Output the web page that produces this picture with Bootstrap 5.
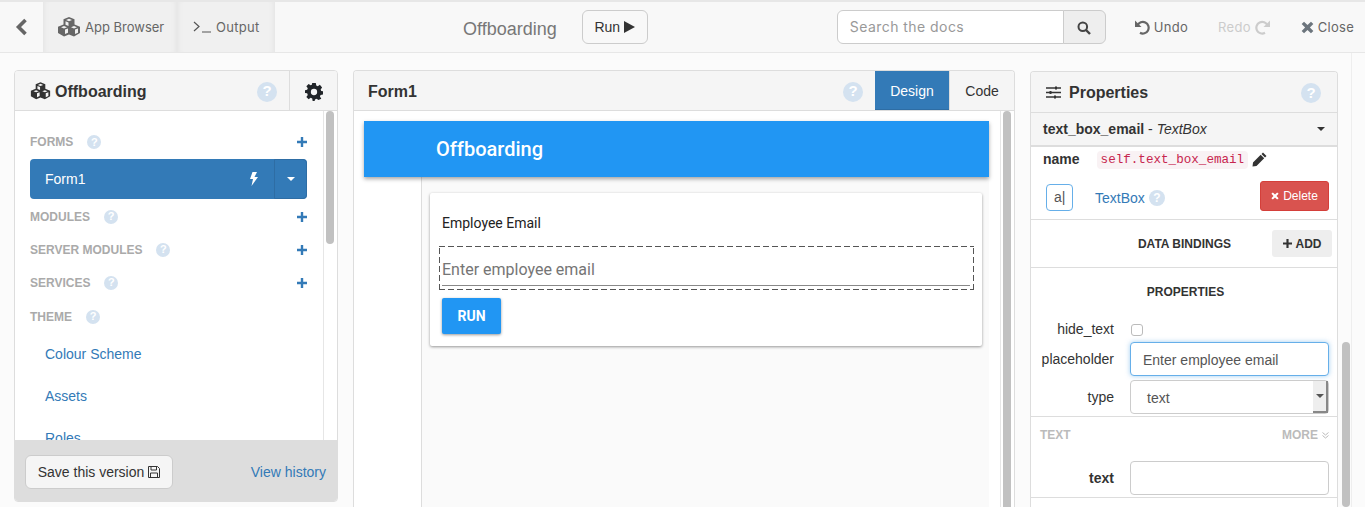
<!DOCTYPE html>
<html lang="en">
<head>
  <meta charset="UTF-8">
  <meta name="viewport" content="width=device-width, initial-scale=1.0">
  <title>Offboarding</title>
  <link href="https://cdn.jsdelivr.net/npm/bootstrap@5.3.0/dist/css/bootstrap.min.css" rel="stylesheet">
  <style>
    html, body { height: 507px; overflow: hidden; }
    body { background: #fbfbfb; font-family: "Liberation Sans", Arial, sans-serif; font-size: 14px; color: #333; }
    a { color: #337ab7; text-decoration: none; }

    /* top bar */
    .top-bar { height: 53px; border-top: 2px solid #e7e7e7; border-bottom: 1px solid #e7e7e7; background: #f8f8f8; font-family: Inter, sans-serif; font-size: 13px; color: #666; }
    .back-cell { width: 43px; }
    .tab-cell { height: 100%; background: #f0f0f0; box-shadow: inset 6px 0 6px -6px #ddd, inset -6px 0 6px -6px #ddd; }
    .tab-cell span, .top-action span { padding-top: 1px; }
    .tab-apps { width: 134px; padding-left: 14px; }
    .tab-output { width: 98px; padding-left: 16px; letter-spacing: .3px; }
    .app-title { margin-left: 188px; font-family: "Liberation Sans", sans-serif; font-size: 18px; color: #777; padding-top: 4px; }
    .run-btn { margin-left: 25px; width: 66px; height: 34px; padding: 0; background: #f8f8f8; border: 1px solid #ccc; color: #333; font-family: "Liberation Sans", sans-serif; font-size: 14px; }
    .search-group { margin-left: 189px; width: 269px; height: 34px; flex-wrap: nowrap; }
    .search-group .form-control { font-family: Inter, sans-serif; font-size: 14px; padding: 0 12px 2px; border-color: #ccc; background: #fff; box-shadow: none; letter-spacing: .45px; }
    .search-group .form-control::placeholder { color: #999; opacity: 1; }
    .search-btn { width: 43px; padding: 0 0 2px; background: #eee; border: 1px solid #ccc; }
    .top-action { color: #666; white-space: nowrap; letter-spacing: .3px; }
    .top-undo { margin-left: 28px; }
    .top-redo { margin-left: 30px; color: #ccc; }
    .top-close { margin-left: 30px; }

    /* workspace */
    .workspace { height: 454px; padding: 17px 0 0 14px; gap: 15px; overflow: hidden; }
    .ide-panel { border: 1px solid #ddd; border-radius: 4px; background: #fff; overflow: hidden; flex: none; --bs-card-border-radius: 4px; }
    .panel-head { height: 40px; flex: none; background: #f5f5f5; border-bottom: 1px solid #ddd; font-weight: 700; color: #333; }
    .panel-left { width: 324px; height: 432px; }
    .panel-mid { width: 662px; height: 437px; border-bottom: 0; border-radius: 4px 4px 0 0; }
    .panel-right { width: 308px; height: 436px; margin-top: 1px; border-bottom: 0; border-radius: 4px 4px 0 0; }
    .panel-right .panel-head { height: 41px; }
    .panel-title { font-size: 16px; padding-top: 2px; }
    .panel-right .panel-title { padding-top: 1px; }
    .gear-cell { width: 48px; height: 100%; border-left: 1px solid #ddd; padding-top: 2px; }
    .help-dot { display: inline-flex; align-items: center; justify-content: center; border-radius: 50%; background: #d4e2f0; color: #fff; font-weight: 700; flex: none; }
    .help-lg { width: 20px; height: 20px; font-size: 15px; margin-top: 2px; margin-right: 12px; }
    .panel-right .help-lg { margin-right: 16px; }
    .help-sm { width: 14px; height: 14px; font-size: 11px; }
    .help-type { width: 16px; height: 16px; font-size: 12px; margin-top: 9px; }

    .scroll-track { width: 14px; flex: none; background: #fff; border-left: 1px solid #e6e6e6; padding: 0 3px 0 2px; }
    .scroll-thumb { background: #c1c1c1; border-radius: 4px; width: 8px; }

    .side-list { padding: 14px 16px 0 15px; }
    .side-head { height: 33px; font-size: 12px; font-weight: 700; color: #aaa; }
    .side-head svg { margin-left: auto; color: #337ab7; }
    .side-head .help-dot { margin-left: 14px; }
    .side-first { height: 34px; }
    .side-theme { margin-top: 1px; }
    .form-row { height: 40px; border-radius: 4px; background: #337ab7; color: #fff; margin-bottom: 1px; }
    .form-main { padding-left: 15px; }
    .form-caret { width: 33px; height: 100%; border: 1px solid #2e6da4; border-radius: 0 4px 4px 0; }
    .caret-down { display: inline-block; border-top: 4px solid; border-left: 4px solid transparent; border-right: 4px solid transparent; }
    .side-link { display: block; height: 42px; line-height: 42px; padding-left: 15px; }
    .side-foot { height: 61px; flex: none; background: #ddd; padding: 3px 11px 0 10px; }
    .save-btn { height: 34px; width: 148px; padding: 0; background: #f5f5f5; border: 1px solid #ccc; color: #333; font-size: 14px; }
    .left-title { padding-left: 15px; }

    .tab-design { width: 74px; height: 100%; background: #337ab7; border-bottom: 1px solid #2e6da4; color: #fff; font-size: 14px; font-weight: 400; padding-top: 2px; }
    .tab-code { width: 65px; height: 100%; border-left: 1px solid #ddd; color: #333; font-size: 14px; font-weight: 400; padding-top: 2px; }
    .mid-title { padding-left: 14px; }
    .prop-icon { margin: 0 8px 0 15px; }

    /* form being designed */
    .canvas { padding: 10px 11px 0 10px; font-family: Roboto, sans-serif; min-width: 0; overflow: hidden; }
    .app-bar { height: 56px; background: #2196f3; color: #fff; font-size: 20px; font-weight: 500; padding-left: 72px; box-shadow: 0 2px 4px rgba(0,0,0,.35); position: relative; }
    .app-body { height: 400px; background: #fafafa; margin-left: 57px; border-left: 1px solid #ddd; padding: 16px 7px 0 8px; }
    .form-card { height: 153px; background: #fff; border-radius: 2px; box-shadow: 0 1px 3px rgba(0,0,0,.4); padding: 0 8px 0 9px; }
    .field-label { height: 53px; padding: 22px 0 0 3px; font-size: 14px; color: #222; line-height: 16px; }
    .field-box { height: 44px; padding: 1px 4px 0 3px;
      background-image: repeating-linear-gradient(90deg, #555 0 6px, transparent 6px 9px), repeating-linear-gradient(90deg, #555 0 6px, transparent 6px 9px), repeating-linear-gradient(0deg, #555 0 6px, transparent 6px 9px), repeating-linear-gradient(0deg, #555 0 6px, transparent 6px 9px);
      background-size: 100% 1px, 100% 1px, 1px 100%, 1px 100%;
      background-position: 0 0, 0 100%, 0 0, 100% 0;
      background-repeat: no-repeat; }
    .field-text { height: 39px; border-bottom: 1px solid #888; font-size: 16px; color: #757575; line-height: 46px; }
    .md-btn { margin: 8px 0 0 3px; width: 59px; height: 36px; border: 0; border-radius: 2px; background: #2196f3; color: #fff; font: 700 14px Roboto, sans-serif; padding: 0; box-shadow: 0 1px 3px rgba(0,0,0,.4); }

    /* properties */
    .prop-sub { height: 34px; flex: none; background: #f5f5f5; border-bottom: 2px solid #ddd; padding: 0 12px; font-size: 14px; }
    .name-row { height: 25px; padding-left: 12px; }
    .name-code { font: 12.6px "Liberation Mono", monospace; color: #c7254e; background: #f9f2f4; border-radius: 4px; padding: 2px 4px; margin-left: 17px; }
    .del-row { height: 48px; padding: 9px 8px 0 15px; border-bottom: 1px solid #ddd; }
    .mini-input { width: 27px; height: 27px; border: 1px solid #66afe9; border-radius: 4px; padding-left: 7px; line-height: 25px; margin: 3px 22px 0 0; color: #555; }
    .type-link { margin: 7px 4px 0 0; }
    .del-btn { width: 69px; height: 30px; padding: 0; background: #d9534f; border: 1px solid #d43f3a; color: #fff; font-size: 12px; border-radius: 3px; }
    .bind-row { height: 48px; border-bottom: 1px solid #ddd; padding-right: 5px; }
    .bind-title { flex: 1; text-align: center; font-size: 12px; font-weight: 700; padding-left: 66px; }
    .add-btn { width: 60px; height: 27px; padding: 0; background: #eee; border: 0; font-size: 12px; font-weight: 700; color: #333; border-radius: 3px; }
    .props-title { height: 48px; text-align: center; font-size: 12px; font-weight: 700; padding: 15px 0 0 3px; }
    .prop-row { padding-right: 8px; }
    .prop-label { width: 83px; text-align: right; margin-right: 16px; flex: none; }
    .prop-check { height: 26px; }
    .prop-check .form-check-input { width: 12px; height: 12px; margin: 2px 0 0 1px; border-color: #bbb; border-radius: 3px; }
    .prop-field { height: 34px; flex: 1; border: 1px solid #ccc; border-radius: 4px; font-size: 14px; padding: 0 12px; background: #fff; color: #555; line-height: 34px; }
    .prop-focus { border-color: #66afe9; box-shadow: 0 0 5px rgba(102,175,233,.6); }
    .prop-select { position: relative; padding-left: 16px; }
    .select-arrow { position: absolute; top: 0; right: 0; width: 15px; height: 32px; background: #eee; border-right: 2px solid #888; border-bottom: 2px solid #888; }
    .text-head { height: 46px; margin-top: 2px; border-top: 1px solid #ddd; padding: 0 8px 9px 9px; font-size: 12px; font-weight: 700; color: #bbb; }
    .last-row { height: 36px; border-bottom: 1px solid #ddd; padding-bottom: 3px; }

    .page-scroll { width: 10px; height: 454px; margin: -17px 0 0 -11px; flex: none; border-right: 1px solid #eee; padding-top: 289px; }
    .page-scroll .scroll-thumb { height: 165px; }
  </style>
</head>
<body>
  <svg width="0" height="0" class="position-absolute">
    <defs>
      <symbol id="i-cubes" viewBox="0 0 24 20">
        <path fill="currentColor" fill-rule="evenodd" d="M12 0l5.500 2.200v5.300l5.500 2.200V16l-6 3.500-5-2-5 2-6-3.500V9.700l5.500-2.200V2.200zM12 1.800L9 3l3 1.200L15 3zM7 9L4 10.200l3 1.200 3-1.200zM17 9l-3 1.200 3 1.200 3-1.200zM8.500 4.200v3.500l3 1.200V5.400zM8 12.600v4.500l3-1.300v-4.400zM18 12.600v4.500l3-1.300v-4.400z"/>
      </symbol>
      <symbol id="i-gear" viewBox="0 0 20 20">
        <path fill="currentColor" fill-rule="evenodd" d="M8 0h4l.5 2.800 1.700.7L16.500 2 19 5l-1.600 2.200.6 1.700 2 .3v3.600l-2.700.5-.7 1.700 1.500 2.400L15 19l-2.200-1.500-1.700.7L10.700 20H8.500L8 17.200l-1.700-.7L4 18l-2.500-2.500 1.600-2.300-.7-1.700L0 11V8l2.400-.5.7-1.700L1.500 3.500 4 1l2.300 1.600 1.300-.6zM10 6.500a3.500 3.500 0 1 0 0 7 3.500 3.500 0 0 0 0-7z"/>
      </symbol>
      <symbol id="i-plus" viewBox="0 0 10 10">
        <path fill="currentColor" d="M3.800 0h2.400v3.800H10v2.400H6.200V10H3.800V6.200H0V3.800h3.800z"/>
      </symbol>
      <symbol id="i-x" viewBox="0 0 12 12">
        <path fill="currentColor" d="M2.800.6L6 3.800 9.200.6l2.200 2.200L8.200 6l3.200 3.200-2.200 2.200L6 8.200l-3.200 3.200L.6 9.200 3.800 6 .6 2.800z"/>
      </symbol>
    </defs>
  </svg>

  <nav class="top-bar d-flex align-items-center">
    <div class="back-cell d-flex justify-content-center">
      <svg width="13" height="18" viewBox="0 0 13 18"><path d="M10.500 2l-7 7 7 7" fill="none" stroke="#666" stroke-width="3.600"/></svg>
    </div>
    <div class="tab-cell tab-apps d-flex align-items-center gap-1">
      <svg width="24" height="20"><use href="#i-cubes"/></svg>
      <span>App Browser</span>
    </div>
    <div class="tab-cell tab-output d-flex align-items-center gap-1">
      <svg width="19" height="12" viewBox="0 0 19 12"><path d="M1 1l5 4.500L1 10M9 11h9" fill="none" stroke="#555" stroke-width="1.200"/></svg>
      <span>Output</span>
    </div>
    <div class="app-title">Offboarding</div>
    <button class="btn run-btn d-flex align-items-center justify-content-center gap-1" type="button">Run
      <svg width="11" height="12" viewBox="0 0 11 12"><path d="M0 0l11 6-11 6z" fill="#333"/></svg>
    </button>
    <div class="input-group search-group">
      <input class="form-control" type="text" placeholder="Search the docs">
      <button class="btn search-btn" type="button">
        <svg width="14" height="14" viewBox="0 0 14 14"><circle cx="5.800" cy="5.800" r="4.300" fill="none" stroke="#444" stroke-width="2"/><path d="M9 9l4 4" stroke="#444" stroke-width="2.400"/></svg>
      </button>
    </div>
    <div class="top-action top-undo d-flex align-items-center gap-1">
      <svg width="16" height="16" viewBox="0 0 16 16"><path d="M3.500 6.500A5.800 5.800 0 1 1 6 13.800" fill="none" stroke="#666" stroke-width="2.200"/><path d="M1 1.500V8h6.500z" fill="#666"/></svg>
      <span>Undo</span>
    </div>
    <div class="top-action top-redo d-flex align-items-center gap-1">
      <span>Redo</span>
      <svg width="16" height="16" viewBox="0 0 16 16"><path d="M12.500 6.500A5.800 5.800 0 1 0 10 13.800" fill="none" stroke="#ccc" stroke-width="2.200"/><path d="M15 1.500V8H8.500z" fill="#ccc"/></svg>
    </div>
    <div class="top-action top-close d-flex align-items-center gap-1">
      <svg width="13" height="13" class="text-secondary"><use href="#i-x"/></svg>
      <span>Close</span>
    </div>
  </nav>

  <main class="workspace d-flex align-items-start">
    <section class="card ide-panel panel-left">
      <div class="panel-head d-flex align-items-center">
        <div class="left-title d-flex align-items-center flex-grow-1">
          <svg width="21" height="18" class="me-1"><use href="#i-cubes"/></svg>
          <span class="panel-title">Offboarding</span>
          <span class="help-dot help-lg ms-auto">?</span>
        </div>
        <div class="gear-cell d-flex align-items-center justify-content-center">
          <svg width="18" height="18" class="text-dark"><use href="#i-gear"/></svg>
        </div>
      </div>
      <div class="d-flex flex-grow-1 overflow-hidden">
        <div class="side-list flex-grow-1 overflow-hidden">
          <div class="side-head side-first d-flex align-items-center">FORMS <span class="help-dot help-sm">?</span>
            <svg width="10" height="10"><use href="#i-plus"/></svg></div>
          <div class="form-row d-flex align-items-center">
            <div class="form-main flex-grow-1 d-flex align-items-center justify-content-between pe-3">
              <span>Form1</span>
              <svg width="9" height="14" viewBox="0 0 9 14"><path d="M3.500 0H8L5.500 5H9L2.500 14l1.500-7H1z" fill="#fff"/></svg>
            </div>
            <div class="form-caret d-flex align-items-center justify-content-center"><span class="caret-down"></span></div>
          </div>
          <div class="side-head d-flex align-items-center">MODULES <span class="help-dot help-sm">?</span>
            <svg width="10" height="10"><use href="#i-plus"/></svg></div>
          <div class="side-head d-flex align-items-center">SERVER MODULES <span class="help-dot help-sm">?</span>
            <svg width="10" height="10"><use href="#i-plus"/></svg></div>
          <div class="side-head d-flex align-items-center">SERVICES <span class="help-dot help-sm">?</span>
            <svg width="10" height="10"><use href="#i-plus"/></svg></div>
          <div class="side-head side-theme d-flex align-items-center">THEME <span class="help-dot help-sm">?</span></div>
          <a class="side-link" href="#">Colour Scheme</a>
          <a class="side-link" href="#">Assets</a>
          <a class="side-link" href="#">Roles</a>
        </div>
        <div class="scroll-track"><div class="scroll-thumb" style="height: 133px"></div></div>
      </div>
      <div class="side-foot d-flex align-items-center justify-content-between">
        <button class="btn save-btn d-flex align-items-center justify-content-center gap-1" type="button">Save this version
          <svg width="12" height="12" viewBox="0 0 12 12"><path d="M.5.500h9l2 2v9H.500zM3 .500v3.500h5.500V.500M2.500 11.500V7h7v4.500" fill="none" stroke="#333"/></svg>
        </button>
        <a href="#">View history</a>
      </div>
    </section>

    <section class="card ide-panel panel-mid">
      <div class="panel-head d-flex align-items-center">
        <span class="flex-grow-1 mid-title panel-title fs-6">Form1</span>
        <span class="help-dot help-lg">?</span>
        <div class="tab-design d-flex align-items-center justify-content-center">Design</div>
        <div class="tab-code d-flex align-items-center justify-content-center">Code</div>
      </div>
      <div class="d-flex flex-grow-1 overflow-hidden">
        <div class="canvas flex-grow-1">
          <div class="app-bar d-flex align-items-center">Offboarding</div>
          <div class="app-body">
            <div class="form-card">
              <div class="field-label">Employee Email</div>
              <div class="field-box"><div class="field-text">Enter employee email</div></div>
              <button class="md-btn" type="button">RUN</button>
            </div>
          </div>
        </div>
        <div class="scroll-track"><div class="scroll-thumb" style="height: 400px"></div></div>
      </div>
    </section>

    <section class="card ide-panel panel-right">
      <div class="panel-head d-flex align-items-center">
        <svg class="prop-icon" width="15" height="13" viewBox="0 0 15 13"><path d="M0 2h15M0 6.500h15M0 11h15" stroke="#333" stroke-width="1.300"/><path d="M9 .500h2v3H9zM3.500 5h2v3h-2zM8 9.500h2v3H8z" fill="#333"/></svg>
        <span class="panel-title flex-grow-1">Properties</span>
        <span class="help-dot help-lg">?</span>
      </div>
      <div class="prop-sub d-flex align-items-center justify-content-between">
        <span><b>text_box_email</b> - <i>TextBox</i></span>
        <span class="caret-down"></span>
      </div>
      <div class="name-row d-flex align-items-center">
        <b>name</b>
        <code class="name-code">self.text_box_email</code>
        <svg class="ms-1" width="15" height="15" viewBox="0 0 15 15"><path d="M11 .500l3.500 3.500-1.500 1.500L9.500 2zM8.700 2.800l3.500 3.500-7.700 7.700L.500 14.500 1 10.500z" fill="#333"/></svg>
      </div>
      <div class="del-row d-flex align-items-start">
        <div class="mini-input">a|</div>
        <a class="type-link" href="#">TextBox</a>
        <span class="help-dot help-type">?</span>
        <button class="btn del-btn ms-auto d-flex align-items-center justify-content-center gap-1" type="button">
          <svg width="8" height="8"><use href="#i-x"/></svg>Delete
        </button>
      </div>
      <div class="bind-row d-flex align-items-center">
        <div class="bind-title">DATA BINDINGS</div>
        <button class="btn add-btn d-flex align-items-center justify-content-center gap-1" type="button">
          <svg width="9" height="9"><use href="#i-plus"/></svg>ADD
        </button>
      </div>
      <div class="props-title">PROPERTIES</div>
      <div class="prop-row prop-check d-flex align-items-center">
        <div class="prop-label">hide_text</div>
        <input class="form-check-input" type="checkbox">
      </div>
      <div class="prop-row d-flex align-items-center mb-1">
        <div class="prop-label">placeholder</div>
        <div class="prop-field prop-focus">Enter employee email</div>
      </div>
      <div class="prop-row d-flex align-items-center">
        <div class="prop-label">type</div>
        <div class="prop-field prop-select">text
          <div class="select-arrow d-flex align-items-center justify-content-center"><span class="caret-down"></span></div>
        </div>
      </div>
      <div class="text-head d-flex align-items-center justify-content-between">
        <span>TEXT</span>
        <span class="d-flex align-items-center gap-1">MORE
          <svg width="7" height="7" viewBox="0 0 7 7"><path d="M.5 .500L3.500 3l3-2.500M.5 3.500L3.500 6l3-2.500" fill="none" stroke="#bbb"/></svg>
        </span>
      </div>
      <div class="prop-row last-row d-flex align-items-center">
        <div class="prop-label fw-bold">text</div>
        <div class="prop-field"></div>
      </div>
    </section>
    <div class="page-scroll"><div class="scroll-thumb"></div></div>
  </main>
  <script src="https://cdn.jsdelivr.net/npm/bootstrap@5.3.0/dist/js/bootstrap.bundle.min.js"></script>
</body>
</html>
